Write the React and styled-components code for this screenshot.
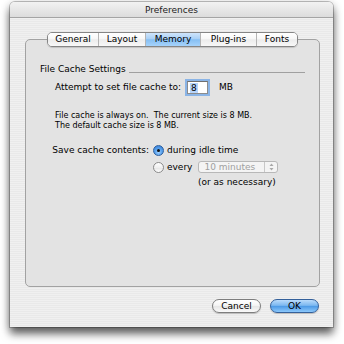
import React from 'react';
import styled, { createGlobalStyle } from 'styled-components';

const Global = createGlobalStyle`
  html, body { margin: 0; padding: 0; background: #ffffff; }
  body { font-family: "DejaVu Sans", "Noto Sans", sans-serif; color: #000; }
`;

const Page = styled.div`
  width: 344px;
  height: 344px;
  box-sizing: border-box;
  padding: 2px 11px 0 10px;
  background: #fff;
`;

const Window = styled.div`
  width: 323px;
  height: 325px;
  display: flex;
  flex-direction: column;
  border-radius: 5px 5px 0 0;
  background: repeating-linear-gradient(to bottom, #f0f0f0 0 1px, #e9e9e9 1px 2px);
  box-shadow: 0 0 0 1px rgba(0, 0, 0, 0.22), 0 7px 9px rgba(0, 0, 0, 0.55), 0 2px 10px rgba(0, 0, 0, 0.28);
`;

const TitleBar = styled.div`
  height: 15px;
  flex: 0 0 auto;
  display: flex;
  align-items: center;
  justify-content: center;
  border-radius: 5px 5px 0 0;
  border-bottom: 1px solid #a4a4a4;
  background: linear-gradient(to bottom, #f2f2f2, #dcdcdc);
  font-size: 9px;
  color: #222;
`;

const Body = styled.div`
  flex: 1;
  display: flex;
  flex-direction: column;
  padding: 14px 13px 14px 15px;
`;

const TabRow = styled.div`
  display: flex;
  justify-content: center;
  position: relative;
  z-index: 1;
`;

const TabGroup = styled.div`
  display: flex;
  height: 13px;
  border: 1px solid #858585;
  border-radius: 5px;
  overflow: hidden;
  box-shadow: 0 1px 1px rgba(0, 0, 0, 0.15);
`;

const Tab = styled.div`
  width: ${p => p.$w}px;
  box-sizing: border-box;
  display: flex;
  align-items: center;
  justify-content: center;
  font-size: 9px;
  line-height: 13px;
  border-left: ${p => (p.$first ? 'none' : '1px solid #b4b4b4')};
  background: ${p =>
    p.$active
      ? 'linear-gradient(to bottom, #cfe5fb 0%, #a9d0f6 45%, #86bff3 52%, #a6d3fb 100%)'
      : 'linear-gradient(to bottom, #ffffff 0%, #f7f7f7 45%, #ececec 52%, #f8f8f8 100%)'};
`;

const Panel = styled.div`
  flex: 1;
  margin-top: -8px;
  border: 1px solid #a2a2a2;
  border-radius: 5px;
  background: #e3e3e3;
  padding: 24px 14px 0 14px;
  display: flex;
  flex-direction: column;
`;

const Heading = styled.div`
  display: flex;
  align-items: flex-end;
  gap: 3px;
  font-size: 9px;
  line-height: 11px;
  white-space: nowrap;
`;

const Rule = styled.div`
  flex: 1;
  border-bottom: 1px solid #a0a0a0;
  margin-bottom: 2px;
`;

const Indent = styled.div`
  padding-left: 15px;
  display: flex;
  flex-direction: column;
`;

const FieldRow = styled.div`
  margin-top: 6px;
  display: flex;
  align-items: center;
  height: 13px;
  font-size: 9px;
  line-height: 11px;
  white-space: nowrap;
`;

const FieldLabel = styled.span`
  flex: 0 0 132px;
`;

const TextField = styled.div`
  width: 21px;
  height: 13px;
  box-sizing: border-box;
  background: #fff;
  border: 1px solid #8c8c8c;
  border-top-color: #6f6f6f;
  box-shadow: 0 0 0 2px #8ab4e6;
  display: flex;
  align-items: center;
  padding-left: 2px;
`;

const Selected = styled.span`
  background: #b6d4fb;
  font-size: 9px;
  line-height: 10px;
  padding: 0 1px;
`;

const Unit = styled.span`
  margin-left: 11px;
`;

const Note = styled.div`
  margin-top: 17px;
  font-size: 8px;
  line-height: 10px;
  white-space: nowrap;
`;

const SaveGrid = styled.div`
  margin-top: 13px;
  padding-left: 15px;
  display: grid;
  grid-template-columns: 94px auto;
  column-gap: 4px;
  font-size: 9px;
  line-height: 12px;
  white-space: nowrap;
`;

const SaveLabel = styled.div`
  justify-self: end;
  height: 12px;
`;

const Options = styled.div`
  display: flex;
  flex-direction: column;
`;

const OptionRow = styled.div`
  display: flex;
  align-items: center;
  height: 12px;
  margin-top: ${p => p.$mt || 0}px;
  padding-left: ${p => p.$pl || 0}px;
`;

const Radio = styled.div`
  width: 11px;
  height: 11px;
  box-sizing: border-box;
  border-radius: 50%;
  margin-right: 3px;
  display: flex;
  align-items: center;
  justify-content: center;
  border: 1px solid ${p => (p.$on ? '#2d5f9e' : '#8a8a8a')};
  background: ${p =>
    p.$on
      ? 'radial-gradient(circle at 50% 70%, #9fd0ff 0%, #5aa2ec 45%, #2f78d4 100%)'
      : 'linear-gradient(to bottom, #ffffff, #f0f0f0 50%, #e4e4e4 52%, #ffffff)'};
`;

const Dot = styled.div`
  width: 3px;
  height: 3px;
  border-radius: 50%;
  background: #111;
`;

const Popup = styled.div`
  margin-left: 6px;
  width: 80px;
  height: 12px;
  box-sizing: border-box;
  border: 1px solid #b8b8b8;
  border-radius: 3px;
  background: #f4f4f4;
  display: flex;
  align-items: stretch;
  color: #a0a0a0;
`;

const PopupText = styled.span`
  flex: 1;
  padding-left: 5px;
  line-height: 10px;
`;

const Stepper = styled.div`
  width: 12px;
  border-left: 1px solid #c8c8c8;
  display: flex;
  align-items: center;
  justify-content: center;
`;

const Footer = styled.div`
  margin-top: 12px;
  margin-right: 1px;
  display: flex;
  justify-content: flex-end;
  gap: 9px;
`;

const Button = styled.div`
  width: 49px;
  height: 14px;
  box-sizing: border-box;
  border-radius: 7px;
  display: flex;
  align-items: center;
  justify-content: center;
  font-size: 9px;
  line-height: 12px;
  border: 1px solid ${p => (p.$primary ? '#34609a' : '#7e7e7e')};
  box-shadow: 0 1px 1px rgba(0, 0, 0, 0.2);
  background: ${p =>
    p.$primary
      ? 'linear-gradient(to bottom, #b9dbfb 0%, #7cb8f0 45%, #4d9ae6 52%, #8cc8fb 100%)'
      : 'linear-gradient(to bottom, #ffffff 0%, #f5f5f5 45%, #e6e6e6 52%, #fafafa 100%)'};
`;

const tabs = [
  { label: 'General', w: 51 },
  { label: 'Layout', w: 47 },
  { label: 'Memory', w: 55, active: true },
  { label: 'Plug-ins', w: 56 },
  { label: 'Fonts', w: 41 },
];

export default function App() {
  return (
    <>
      <Global />
      <Page>
        <Window>
          <TitleBar>Preferences</TitleBar>
          <Body>
            <TabRow>
              <TabGroup>
                {tabs.map((t, i) => (
                  <Tab key={t.label} $w={i === 0 ? t.w - 1 : t.w} $first={i === 0} $active={t.active}>
                    {t.label}
                  </Tab>
                ))}
              </TabGroup>
            </TabRow>
            <Panel>
              <Heading>
                <span>File Cache Settings</span>
                <Rule />
              </Heading>
              <Indent>
                <FieldRow>
                  <FieldLabel>Attempt to set file cache to:</FieldLabel>
                  <TextField>
                    <Selected>8</Selected>
                  </TextField>
                  <Unit>MB</Unit>
                </FieldRow>
                <Note>
                  File cache is always on.&nbsp; The current size is 8 MB.
                  <br />
                  The default cache size is 8 MB.
                </Note>
              </Indent>
              <SaveGrid>
                <SaveLabel>Save cache contents:</SaveLabel>
                <Options>
                  <OptionRow>
                    <Radio $on>
                      <Dot />
                    </Radio>
                    during idle time
                  </OptionRow>
                  <OptionRow $mt={5}>
                    <Radio />
                    every
                    <Popup>
                      <PopupText>10 minutes</PopupText>
                      <Stepper>
                        <svg width="5" height="8" viewBox="0 0 5 8">
                          <path d="M2.5 0.5 L4.5 3 L0.5 3 Z" fill="#a8a8a8" />
                          <path d="M2.5 7.5 L4.5 5 L0.5 5 Z" fill="#a8a8a8" />
                        </svg>
                      </Stepper>
                    </Popup>
                  </OptionRow>
                  <OptionRow $mt={3} $pl={45}>
                    (or as necessary)
                  </OptionRow>
                </Options>
              </SaveGrid>
            </Panel>
            <Footer>
              <Button>Cancel</Button>
              <Button $primary>OK</Button>
            </Footer>
          </Body>
        </Window>
      </Page>
    </>
  );
}
